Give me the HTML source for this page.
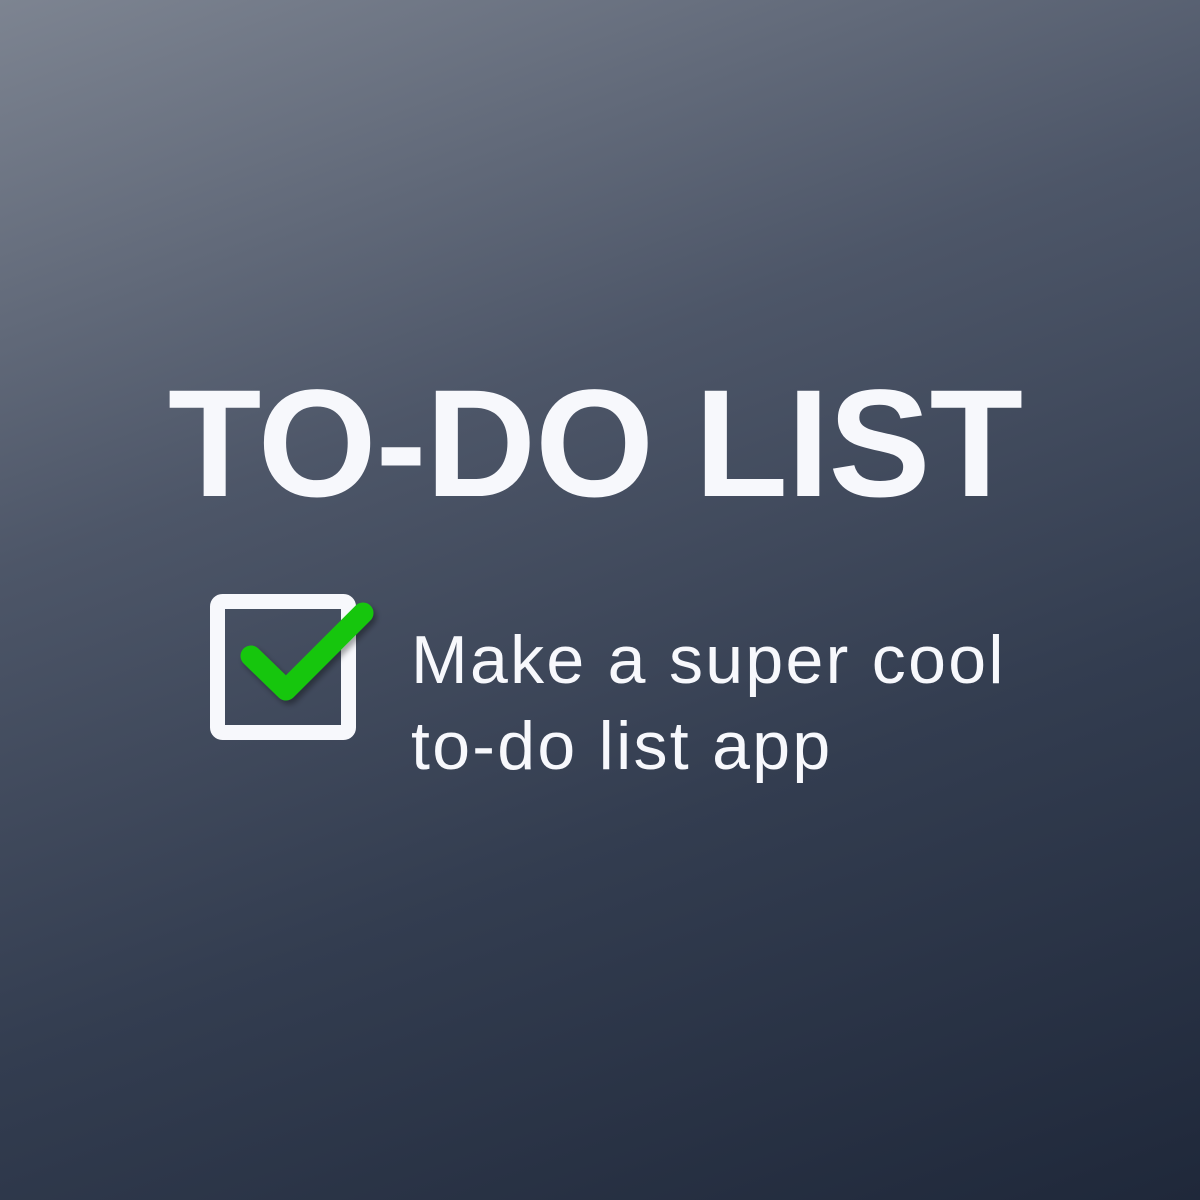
<!DOCTYPE html>
<html><head><style>
html,body{margin:0;padding:0}
body{width:1200px;height:1200px;background:linear-gradient(160deg,#7d8491 0%,#4d5668 35%,#333d50 65%,#1f283a 100%);position:relative;overflow:hidden;font-family:"Liberation Sans",Arial,sans-serif;color:#f7f8fc}
.t{position:absolute;left:-5px;width:1200px;text-align:center;top:354px;font-size:153px;font-weight:bold;line-height:180px;letter-spacing:-1px}
.s{position:absolute;left:411px;top:617px;font-size:68px;line-height:86px;letter-spacing:2.3px}
svg{position:absolute;left:0;top:0}
</style></head><body>
<div class="t">TO-DO LIST</div>
<svg width="1200" height="1200">
<defs><filter id="sh" x="-20%" y="-20%" width="150%" height="150%"><feDropShadow dx="3" dy="4" stdDeviation="3" flood-color="#000" flood-opacity="0.35"/></filter></defs>
<rect x="217.5" y="601.5" width="131" height="131" rx="5" fill="none" stroke="#f7f8fc" stroke-width="15"/>
<polyline points="251,656 286,690 363,613" fill="none" stroke="#16c60c" stroke-width="21" stroke-linecap="round" stroke-linejoin="round" filter="url(#sh)"/>
</svg>
<div class="s">Make a super cool<br>to-do list app</div>
</body></html>
